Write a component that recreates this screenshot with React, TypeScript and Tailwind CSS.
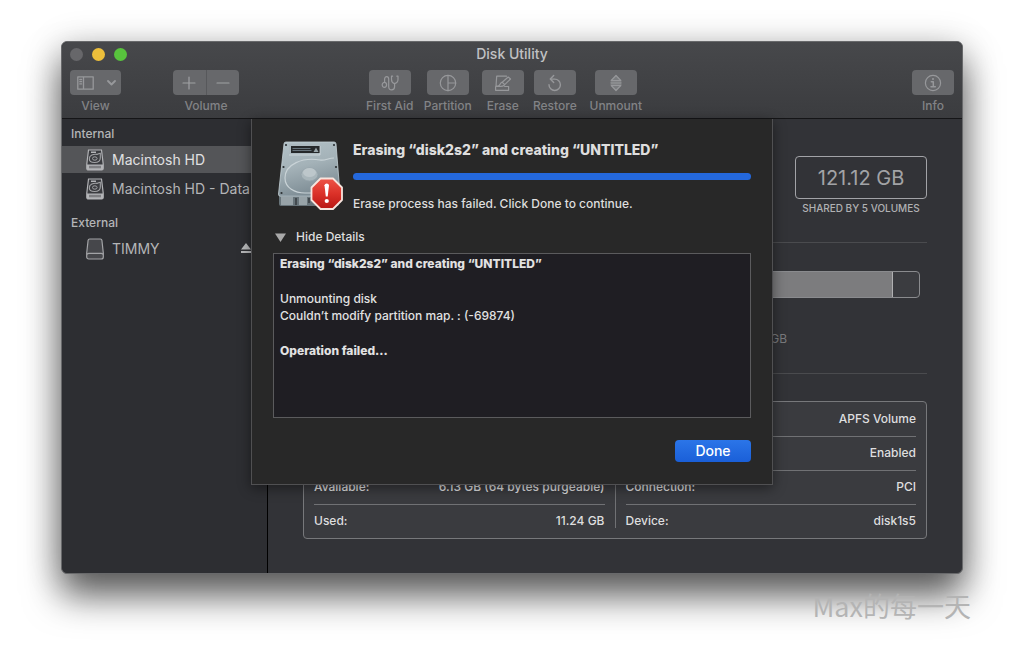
import type { ReactNode } from "react";

function ToolItem({ label, width, children }: { label: string; width: string; children: ReactNode }) {
  return (
    <div className={`flex flex-col items-center gap-[3px] ${width}`}>
      <button
        type="button"
        aria-label={label}
        className="flex h-[25px] w-[42px] items-center justify-center rounded bg-[#67686b] text-[#97989b]"
      >
        {children}
      </button>
      <span className="text-xs leading-4 font-medium whitespace-nowrap text-[#828386]">{label}</span>
    </div>
  );
}

const line = {
  fill: "none",
  stroke: "currentColor",
  strokeWidth: 1.2,
  strokeLinecap: "round" as const,
  strokeLinejoin: "round" as const,
};

function FirstAidIcon() {
  return (
    <svg width="18" height="18" viewBox="0 0 18 18" {...line}>
      <path d="M11.600 2.200H10.500v3.200c0 2 1.300 3.600 3 4.200 1.700-.6 3.500-2.200 3.500-4.200V2.200h-1.200" />
      <path d="M13.600 9.600v3.200c0 2-1.200 3-3 3s-2.900-1-2.900-3V5.200C7.700 3.600 7 2.700 5.700 2.700S3.600 3.600 3.600 5v3.500" />
      <ellipse cx="3.400" cy="10.800" rx="2.200" ry="2.500" />
    </svg>
  );
}

function PartitionIcon() {
  return (
    <svg width="18" height="18" viewBox="0 0 18 18" {...line}>
      <circle cx="9" cy="9" r="7.700" />
      <path d="M9 1.300v15.400M9 9h7.700" />
    </svg>
  );
}

function EraseIcon() {
  return (
    <svg width="18" height="18" viewBox="0 0 18 18" {...line}>
      <path d="M12.500 2.200H2.700L2 12.200h3M4.500 12.500H1.600v3.800h13v-3.800h-4" />
      <path d="M8.200 8.200l6-5.200 2.300 2-5.800 5.600c-1.200 1.800-3.600 2-6.800 1.900 2-.7 2.200-3.700 4.300-4.300zM8.200 8.200l2.500 2.400" />
    </svg>
  );
}

function RestoreIcon() {
  return (
    <svg width="18" height="18" viewBox="0 0 18 18" {...line} strokeWidth={1.4}>
      <path d="M3 10.800a5.700 5.700 0 1 0 5.700-5.700H4.500" />
      <path d="M7.700 1.600L4.300 5.100l3.400 3.500" />
    </svg>
  );
}

function UnmountIcon() {
  return (
    <svg width="18" height="18" viewBox="0 0 18 18" {...line}>
      <path d="M9 1.500l4.800 5H4.200zM9 16.500l4.800-5H4.200z" fill="currentColor" fillOpacity=".4" />
      <path d="M4 8.200h10M4 9.900h10" />
    </svg>
  );
}

function InfoIcon() {
  return (
    <svg width="18" height="18" viewBox="0 0 18 18" {...line}>
      <circle cx="9" cy="9" r="7.600" />
      <path d="M7.300 7.700H9.300v5M7 12.800h4.300" strokeWidth="1.500" />
      <circle cx="9" cy="5" r="1" fill="currentColor" stroke="none" />
    </svg>
  );
}

function InternalDriveIcon() {
  return (
    <svg width="20" height="22" viewBox="0 0 20 22" className="shrink-0">
      <path d="M3.500 1h13l1.700 14v4.500a1.500 1.500 0 0 1-1.500 1.500H3.300a1.500 1.500 0 0 1-1.500-1.500V15z" fill="#3b3c40" stroke="#b3b4b7" strokeWidth="1.200" />
      <path d="M1.800 15.500h16.400v4a1.500 1.500 0 0 1-1.500 1.500H3.300a1.500 1.500 0 0 1-1.500-1.500z" fill="#b3b4b7" />
      <path d="M6 3.300h5" stroke="#b3b4b7" strokeWidth="1.400" />
      <path d="M15.300 4.200c-1.500 0-2.300.9-3.300 1.200-3.500-.6-7.700 1-7.700 4.300 0 2.400 2.300 3.800 5.200 3.800 3.600 0 5.800-2 5.800-4.500z" fill="none" stroke="#a1a2a5" strokeWidth="1.100" />
      <ellipse cx="9.800" cy="9.500" rx="2.300" ry="1.700" fill="none" stroke="#a1a2a5" />
      <path d="M5 16.800v2.500M7 16.800v2.500M9 16.800v2.500M11 16.800v2.500M13 16.800v2.500M15 16.800v2.500" stroke="#4a4b4f" />
    </svg>
  );
}

function ExternalDriveIcon() {
  return (
    <svg width="20" height="22" viewBox="0 0 20 22" className="shrink-0">
      <path d="M4.600 1h10.800a1.500 1.500 0 0 1 1.500 1.300L18.300 15v4a2 2 0 0 1-2 2H3.700a2 2 0 0 1-2-2v-4L3.100 2.300A1.500 1.500 0 0 1 4.600 1z" fill="#46474b" stroke="#a3a4a7" strokeWidth="1.200" />
      <path d="M1.900 16.200c.7-.6 1.200-.8 2-.8h12.200c.8 0 1.300.2 2 .8" fill="none" stroke="#a3a4a7" strokeWidth="1.200" />
    </svg>
  );
}

function FailedDiskIcon() {
  return (
    <svg width="68" height="72" viewBox="0 0 68 72" className="shrink-0" role="img" aria-label="Disk error">
      <defs>
        <linearGradient id="plate" x1="0" y1="0" x2="0.300" y2="1">
          <stop offset="0" stopColor="#b3c2c8" />
          <stop offset="0.500" stopColor="#a4b2b8" />
          <stop offset="1" stopColor="#7f8e96" />
        </linearGradient>
        <linearGradient id="alert" x1="0" y1="0" x2="0" y2="1">
          <stop offset="0" stopColor="#ed5548" />
          <stop offset="0.500" stopColor="#db3128" />
          <stop offset="1" stopColor="#b81612" />
        </linearGradient>
      </defs>
      <path d="M2 54h60v9a2 2 0 0 1-2 2H4a2 2 0 0 1-2-2z" fill="#68747a" />
      <path d="M4 56h12v8H4zM22 56h8v8h-8z" fill="#98a3a8" />
      <path d="M19 57v7M32 57v5" stroke="#42494e" strokeWidth="2" />
      <path d="M9 1h48a2 2 0 0 1 2 1.800l4 50.200a2 2 0 0 1-2 2.200H3.500a2 2 0 0 1-2-2.200L7 2.800A2 2 0 0 1 9 1z" fill="url(#plate)" stroke="#c4d0d5" strokeWidth=".8" />
      <path d="M12 3h31v11H12z" fill="#acb9bf" />
      <path d="M14 5h29v7H14z" fill="#25282a" />
      <path d="M15.500 7.500h18M15.500 9.500h19" stroke="#66727a" strokeWidth="1" />
      <path d="M36.500 11l2.500-4.500 2.500 4.500z" fill="#98a4a9" />
      <path d="M12 14h31V5" stroke="#d2dbdf" strokeWidth=".8" fill="none" />
      <path d="M57 17c-6 0-9 3-14 2-17-3-35 4-35 18 0 10 10 15 20 15h18" fill="none" stroke="#c9d3d7" strokeWidth="1.200" />
      <ellipse cx="32.500" cy="33.500" rx="8.500" ry="6.500" fill="#a9b6bb" stroke="#94a2a9" strokeWidth=".8" />
      <ellipse cx="32.500" cy="31.500" rx="6.500" ry="4.500" fill="#bdc7cb" />
      <g fill="#2b3033">
        <circle cx="9" cy="4" r="1.100" />
        <circle cx="57" cy="4" r="1.100" />
        <circle cx="6.500" cy="26" r="1.100" />
        <circle cx="59" cy="26" r="1.100" />
        <circle cx="4.500" cy="52" r="1.100" />
      </g>
      <path d="M43.500 37.500h12.500l9 9v12.500l-9 9H43.500l-9-9V46.500z" fill="url(#alert)" stroke="#f7e4dd" strokeWidth="1.800" strokeLinejoin="round" />
      <path d="M47.500 44.300a2.300 2.300 0 0 1 4.500 0L50.700 55.500h-1.900z" fill="#fff" />
      <circle cx="49.750" cy="60" r="2.100" fill="#fff" />
    </svg>
  );
}

const details: { label: string; value: string }[][] = [
  [
    { label: "", value: "" },
    { label: "", value: "" },
    { label: "Available:", value: "6.13 GB (64 bytes purgeable)" },
    { label: "Used:", value: "11.24 GB" },
  ],
  [
    { label: "", value: "APFS Volume" },
    { label: "", value: "Enabled" },
    { label: "Connection:", value: "PCI" },
    { label: "Device:", value: "disk1s5" },
  ],
];

function DetailTable({ rows }: { rows: { label: string; value: string }[] }) {
  return (
    <table className="w-full border-collapse text-xs text-[#dededf]">
      <tbody>
        {rows.map((row, i) => (
          <tr key={i} className="h-[34px] border-b border-[#707174] last:border-b-0">
            <th scope="row" className="p-0 text-left font-medium whitespace-nowrap">{row.label}</th>
            <td className="p-0 text-right font-medium whitespace-nowrap">{row.value}</td>
          </tr>
        ))}
      </tbody>
    </table>
  );
}

function EraseSheet() {
  return (
    <section
      role="dialog"
      aria-labelledby="sheet-title"
      className="absolute top-0 left-1/2 w-[522px] -translate-x-1/2 border border-t-0 border-[#505052] bg-[#282828] px-[21px] pt-5 pb-[22px] text-xs font-medium text-[#dedede] shadow-[0_3px_12px_rgba(0,0,0,0.45)]"
    >
      <div className="flex gap-2 pl-1">
        <div className="pt-0.5">
          <FailedDiskIcon />
        </div>
        <div className="grow pt-[3px]">
          <h2 id="sheet-title" className="text-sm leading-4 font-extrabold whitespace-nowrap">
            Erasing “disk2s2” and creating “UNTITLED”
          </h2>
          <div
            role="progressbar"
            aria-valuenow={100}
            aria-label="Erase progress"
            className="mt-[15px] h-[7px] rounded-full bg-[#2468dc]"
          />
          <p className="mt-4 leading-4 whitespace-nowrap">Erase process has failed. Click Done to continue.</p>
        </div>
      </div>
      <button type="button" aria-expanded="true" className="mt-4 flex h-4 items-center gap-2.5 pl-0.5">
        <svg width="11" height="9" viewBox="0 0 11 9" fill="#a9a9a9">
          <path d="M0 .5h11L5.500 9z" />
        </svg>
        <span>Hide Details</span>
      </button>
      <div className="mt-2 h-[165px] border border-[#5b5b5d] bg-[#1f1e23] px-1.5 pt-px leading-[17px] text-[#e2e2e2]">
        <p className="font-extrabold">Erasing “disk2s2” and creating “UNTITLED”</p>
        <p className="mt-[18px]">Unmounting disk</p>
        <p>Couldn’t modify partition map. : (-69874)</p>
        <p className="mt-[18px] font-extrabold">Operation failed...</p>
      </div>
      <div className="mt-[22px] flex justify-end">
        <button type="button" className="h-[22px] w-[76px] rounded bg-linear-to-b from-[#2b75e8] to-[#1a5fd8] text-sm leading-4 text-white">
          Done
        </button>
      </div>
    </section>
  );
}

export default function App() {
  return (
    <div className="min-h-screen bg-white px-[61px] pt-[41px] font-['Inter','Noto_Sans_CJK_SC',sans-serif]">
      <main className="rounded-md border border-[#68696b] bg-[#323337] shadow-[0_22px_36px_rgba(0,0,0,0.6),0_4px_36px_rgba(0,0,0,0.2)]">
        <header className="rounded-t-md border-b border-[#151517] bg-linear-to-b from-[#47484b] to-[#3b3c3f] px-2 pb-1 text-[#828386]">
          <div className="grid grid-cols-[1fr_auto_1fr] items-center pt-1">
            <div className="flex gap-[9px]">
              <button type="button" aria-label="Close" className="size-[13px] rounded-full bg-[#67676a]" />
              <button type="button" aria-label="Minimize" className="size-[13px] rounded-full bg-[#edbf3b]" />
              <button type="button" aria-label="Zoom" className="size-[13px] rounded-full bg-[#58c33d]" />
            </div>
            <h1 className="text-sm leading-4 font-medium text-[#c0c1c3]">Disk Utility</h1>
          </div>
          <div className="mt-2 flex">
            <div className="flex w-[51px] flex-col items-center gap-[3px]">
              <button
                type="button"
                aria-label="View"
                className="flex h-[25px] w-full items-center justify-between rounded bg-[#67686b] pr-1 pl-[7px] text-[#97989b]"
              >
                <svg width="17" height="14" viewBox="0 0 17 14" {...line} strokeWidth={1.300}>
                  <path d="M.8.8h15.400v12.400H.8zM6.500.8v12.400M2.800 3.500h1.800M2.800 5.700h1.800M2.800 7.900h1.800" />
                </svg>
                <svg width="11" height="8" viewBox="0 0 11 8" {...line} strokeWidth={1.900}>
                  <path d="M2 2l3.500 3.500L9 2" />
                </svg>
              </button>
              <span className="text-xs leading-4 font-medium">View</span>
            </div>
            <div className="ml-[52px] flex w-[66px] flex-col items-center gap-[3px]">
              <div className="flex h-[25px] w-full divide-x divide-[#57585b] overflow-hidden rounded bg-[#67686b] text-[#a0a1a4]">
                <button type="button" aria-label="Add volume" className="flex flex-1 items-center justify-center">
                  <svg width="14" height="14" viewBox="0 0 14 14" {...line}>
                    <path d="M7 1v12M1 7h12" />
                  </svg>
                </button>
                <button type="button" aria-label="Remove volume" className="flex flex-1 items-center justify-center">
                  <svg width="14" height="14" viewBox="0 0 14 14" {...line}>
                    <path d="M1 7h12" />
                  </svg>
                </button>
              </div>
              <span className="text-xs leading-4 font-medium">Volume</span>
            </div>
            <div className="grow-10" />
            <div className="flex gap-2.5">
              <ToolItem label="First Aid" width="w-12"><FirstAidIcon /></ToolItem>
              <ToolItem label="Partition" width="w-12"><PartitionIcon /></ToolItem>
              <ToolItem label="Erase" width="w-[42px]"><EraseIcon /></ToolItem>
              <ToolItem label="Restore" width="w-[42px]"><RestoreIcon /></ToolItem>
              <ToolItem label="Unmount" width="w-[60px]"><UnmountIcon /></ToolItem>
            </div>
            <div className="grow-21" />
            <ToolItem label="Info" width="w-[42px]"><InfoIcon /></ToolItem>
          </div>
        </header>

        <div className="relative flex">
          <nav className="w-[206px] shrink-0 overflow-hidden rounded-bl-md border-r border-black bg-[#2d2e32] text-sm text-[#b4b5b7]">
            <h2 className="pt-[7px] pb-1 pl-[9px] text-xs leading-4 font-medium">Internal</h2>
            <ul>
              <li>
                <a href="#macintosh-hd" aria-current="page" className="flex h-[27px] items-center gap-[7px] bg-[#545558] pl-[23px] whitespace-nowrap text-[#e0e0e1]">
                  <InternalDriveIcon />
                  Macintosh HD
                </a>
              </li>
              <li>
                <a href="#macintosh-hd-data" className="mt-0.5 flex h-[27px] items-center gap-[7px] pl-[23px] whitespace-nowrap">
                  <InternalDriveIcon />
                  Macintosh HD - Data
                </a>
              </li>
            </ul>
            <h2 className="mt-[13px] pb-1 pl-[9px] text-xs leading-4 font-medium">External</h2>
            <ul>
              <li className="flex h-[27px] items-center pr-4 pl-[23px]">
                <a href="#timmy" className="flex grow items-center gap-[7px]">
                  <ExternalDriveIcon />
                  TIMMY
                </a>
                <button type="button" aria-label="Eject TIMMY">
                  <svg width="10" height="11" viewBox="0 0 10 11" fill="#b9babc">
                    <path d="M5 0l5 6.500H0zM0 8h10v2H0z" />
                  </svg>
                </button>
              </li>
            </ul>
          </nav>

          <div className="grow pt-[37px] pr-[35px] pb-[34px] pl-[35px]">
            <div className="flex justify-end">
              <div className="flex w-[132px] flex-col items-center">
                <div className="flex h-[43px] w-full items-center justify-center rounded border border-[#a2a3a7] text-xl text-[#a2a3a6]">
                  121.12 GB
                </div>
                <span className="mt-px text-[10px] leading-4 font-medium whitespace-nowrap text-[#b0b1b3]">SHARED BY 5 VOLUMES</span>
              </div>
            </div>
            <hr className="mt-[26px] border-[#4a4b4e]" />
            <div className="mx-[7px] mt-7 flex h-[27px] overflow-hidden rounded border border-[#8a8b8e] bg-[#3b3c40]">
              <div className="grow border-r border-[#b0b0b2] bg-[#7c7c7e]" />
              <div className="w-[26px]" />
            </div>
            <p className="mt-[33px] pr-[140px] text-right text-xs leading-4 text-[#7a7b7e]">GB</p>
            <hr className="mt-[26px] border-[#4a4b4e]" />
            <div className="mt-[27px] grid grid-cols-[1fr_1px_1fr] gap-x-2.5 rounded border border-[#77787b] bg-[#3a3b3f] px-2.5">
              <DetailTable rows={details[0]} />
              <div className="my-2.5 bg-[#707174]" />
              <DetailTable rows={details[1]} />
            </div>
          </div>

          <EraseSheet />
        </div>
      </main>
      <footer className="pt-3 text-right">
        <span className="-mr-2 font-['Noto_Sans_CJK_SC',sans-serif] text-[27px] leading-10 text-[#b4b4b4]">Max的每一天</span>
      </footer>
    </div>
  );
}
